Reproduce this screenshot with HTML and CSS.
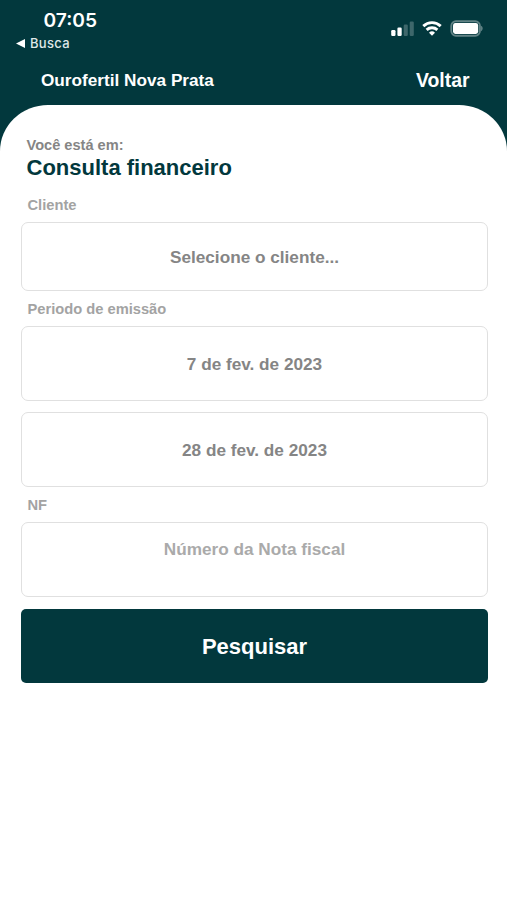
FILE: index.html
```
<!DOCTYPE html>
<html lang="pt-BR">
<head>
    <meta charset="UTF-8">
    <meta name="viewport" content="width=device-width, initial-scale=1.0">
    <title>Consulta financeiro</title>
    <link rel="stylesheet" href="styles.css">
</head>
<body>
    <div class="status-bar">
        <div class="status-left">
            <div class="time">07:05</div>
            <div class="back-app">
                <svg width="9" height="9" viewBox="0 0 9 9"><path d="M0 4.5L9 0V9Z" fill="#fff"/></svg>
                <span>Busca</span>
            </div>
        </div>
        <div class="status-icons">
            <svg width="23" height="17" viewBox="0 0 23 17" fill="#fff">
                <rect x="0.2" y="10" width="4.3" height="6" rx="1.2"/>
                <rect x="6.4" y="7.5" width="4.3" height="8.5" rx="1.2"/>
                <rect x="12.7" y="4.6" width="4.1" height="11.4" rx="1.2" opacity="0.24"/>
                <rect x="18.7" y="1.6" width="4.1" height="14.4" rx="1.2" opacity="0.24"/>
            </svg>
            <svg width="20" height="17" viewBox="0 0 20 17" fill="none" stroke="#fff" stroke-width="2.9">
                <path d="M1.3 6.1A12.7 12.7 0 0 1 18.7 6.1"/>
                <path d="M4.6 9.9A8 8 0 0 1 15.4 9.9"/>
                <path d="M10 15.8L7 12.7A4.4 4.4 0 0 1 13 12.7Z" fill="#fff" stroke="none"/>
            </svg>
            <svg width="33" height="17" viewBox="0 0 33 17">
                <rect x="1.3" y="1.3" width="28.6" height="14.4" rx="4.6" fill="none" stroke="#fff" stroke-opacity="0.38" stroke-width="1.9"/>
                <rect x="3" y="3" width="25.2" height="11" rx="2.4" fill="#fff"/>
                <path d="M31.2 5.8C33 6.7 33 10.3 31.2 11.2Z" fill="#fff" opacity="0.45"/>
            </svg>
        </div>
    </div>

    <header class="header">
        <span class="company">Ourofertil Nova Prata</span>
        <a class="back-link" href="#">Voltar</a>
    </header>

    <main class="content">
        <p class="subtitle">Você está em:</p>
        <h1>Consulta financeiro</h1>

        <form>
            <label for="cliente">Cliente</label>
            <button type="button" class="field client" id="cliente">Selecione o cliente...</button>

            <label for="dataInicio">Periodo de emissão</label>
            <button type="button" class="field date" id="dataInicio">7 de fev. de 2023</button>
            <button type="button" class="field date" id="dataFim">28 de fev. de 2023</button>

            <label for="nf">NF</label>
            <input type="text" class="field nf" id="nf" placeholder="Número da Nota fiscal">

            <button type="button" class="search">Pesquisar</button>
        </form>
    </main>
</body>
</html>
```
FILE: styles.css
```
* {
    box-sizing: border-box;
}

body {
    margin: 0;
    min-height: 100vh;
    display: flex;
    flex-direction: column;
    font-family: "Liberation Sans", Arial, sans-serif;
    font-weight: bold;
    background-color: #02383d;
}

.status-bar {
    display: flex;
    justify-content: space-between;
    height: 56px;
    padding: 9px 24px 0 16px;
    font-family: Inter, sans-serif;
    color: #fff;
}

.time {
    padding-left: 27.5px;
    font-size: 19.2px;
    font-weight: 600;
    line-height: 22px;
}

.back-app {
    display: flex;
    align-items: center;
    gap: 5px;
    margin-top: 3px;
    font-size: 13px;
    font-weight: 500;
    line-height: 18px;
    letter-spacing: 0.3px;
    color: #dfe7e8;
}

.status-icons {
    display: flex;
    gap: 8px;
    padding-top: 11px;
}

.header {
    display: flex;
    justify-content: space-between;
    align-items: center;
    height: 49px;
    padding: 0 37.5px 1px 41px;
    color: #fff;
}

.company {
    font-size: 17.2px;
}

.back-link {
    font-size: 19.4px;
    color: #fff;
    text-decoration: none;
}

.content {
    flex: 1;
    padding: 31px 19px 0 21px;
    background-color: #fff;
    border-radius: 48px 48px 0 0 / 46px 46px 0 0;
}

.subtitle {
    margin: 0 0 0 5.5px;
    font-size: 14.6px;
    line-height: 18px;
    color: #858585;
}

h1 {
    margin: 0 0 0 5.5px;
    font-size: 22px;
    line-height: 28px;
    color: #02383d;
}

form {
    display: flex;
    flex-direction: column;
}

label {
    margin: 14px 0 8px 6.5px;
    font-size: 14.7px;
    line-height: 18px;
    color: #a3a3a3;
}

.field {
    width: 100%;
    padding: 2px 0 0;
    border: 1px solid #e0e0e0;
    border-radius: 7px;
    background-color: #fff;
    font-family: inherit;
    font-size: 17.2px;
    font-weight: bold;
    text-align: center;
    color: #858585;
}

.client {
    height: 69px;
}

.date {
    height: 75px;
}

.date + .date {
    margin-top: 11px;
}

.field + label {
    margin-top: 9px;
}

.nf {
    height: 75px;
    padding-bottom: 22px;
}

.nf::placeholder {
    color: #aaa;
    opacity: 1;
}

.search {
    height: 74px;
    margin-top: 12px;
    padding-top: 3px;
    border: none;
    border-radius: 5px;
    background-color: #02383d;
    font-family: inherit;
    font-size: 22px;
    font-weight: bold;
    color: #fff;
}
```
